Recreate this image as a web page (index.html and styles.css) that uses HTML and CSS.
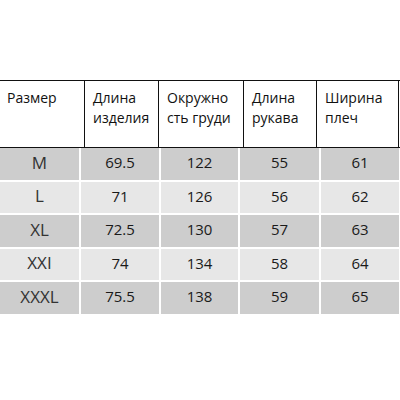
FILE: index.html
```html
<!DOCTYPE html>
<html>
<head>
<meta charset="utf-8">
<link rel="stylesheet" href="styles.css">
</head>
<body>
<div class="page">
  <div class="head">
    <div class="hc c1">Размер</div>
    <div class="hc c2">Длина<br>изделия</div>
    <div class="hc c3">Окружно<br>сть груди</div>
    <div class="hc c4">Длина<br>рукава</div>
    <div class="hc c5">Ширина<br>плеч</div>
  </div>
  <div class="rows">
    <div class="row dark"><div class="size">M</div><div>69.5</div><div>122</div><div>55</div><div>61</div></div>
    <div class="row light"><div class="size">L</div><div>71</div><div>126</div><div>56</div><div>62</div></div>
    <div class="row dark"><div class="size">XL</div><div>72.5</div><div>130</div><div>57</div><div>63</div></div>
    <div class="row light"><div class="size">XXI</div><div>74</div><div>134</div><div>58</div><div>64</div></div>
    <div class="row dark"><div class="size">XXXL</div><div>75.5</div><div>138</div><div>59</div><div>65</div></div>
  </div>
</div>
</body>
</html>
```
FILE: styles.css
```css
html, body {
  margin: 0;
  padding: 0;
  background: #fff;
}
.page {
  width: 400px;
  height: 400px;
  padding-top: 80px;
  box-sizing: border-box;
  font-family: "Open Sans", sans-serif;
}
.head {
  display: grid;
  grid-template-columns: 84px 74px 85px 73px 83px;
  border-top: 1px solid #111;
  border-bottom: 1px solid #111;
  height: 68px;
  box-sizing: border-box;
}
.hc {
  font-size: 14px;
  line-height: 20px;
  color: #111;
  padding: 7px 0 0 8px;
  border-left: 1px solid #111;
}
.hc.c1 {
  border-left: none;
  padding-left: 7px;
}
.hc.c5 {
  border-right: 1px solid #111;
}
.rows {
  display: flex;
  flex-direction: column;
  gap: 2px;
  width: 397px;
}
.row {
  display: grid;
  grid-template-columns: 79px 78px 77px 79px 78px;
  column-gap: 2px;
  height: 31.5px;
}
.row > div {
  display: flex;
  align-items: center;
  justify-content: center;
  font-size: 15px;
  color: #1a1a1a;
  padding-bottom: 3px;
  box-sizing: border-box;
}
.row.dark > div { background: #cdcdcd; }
.row.light > div { background: #e7e7e7; }
.row > .size {
  font-size: 17px;
  color: #333;
}
```
